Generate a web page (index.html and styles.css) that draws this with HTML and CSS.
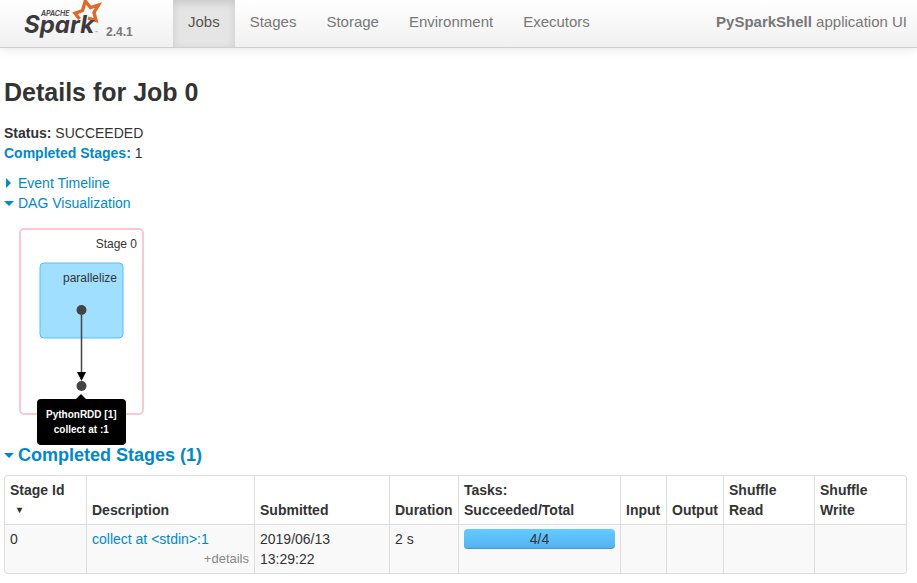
FILE: index.html
```html
<!DOCTYPE html>
<html lang="en">
<head>
<meta charset="utf-8">
<title>PySparkShell - Details for Job 0</title>
<link rel="stylesheet" href="styles.css">
</head>
<body>
<header class="navbar">
  <a class="brand" href="#" aria-label="Apache Spark">
    <svg class="logo" width="80" height="40" viewBox="22 0 80 40">
      <text class="logo-small" x="41" y="16">APACHE</text>
      <path class="star" d="M79.500 19L75 13.300L82.500 10.500L85.300 1.200L90.500 7.500L98.500 5L94 12.500L96 20.500L88 18"/>
      <text class="logo-name" x="24" y="33">Spark</text>
      <text class="logo-tm" x="95" y="34">™</text>
    </svg>
    <span class="version">2.4.1</span>
  </a>
  <nav class="nav">
    <a class="tab active" href="#">Jobs</a>
    <a class="tab" href="#">Stages</a>
    <a class="tab" href="#">Storage</a>
    <a class="tab" href="#">Environment</a>
    <a class="tab" href="#">Executors</a>
  </nav>
  <p class="app-name"><strong>PySparkShell</strong> application UI</p>
</header>
<main class="page">
  <h1 class="title">Details for Job 0</h1>
  <ul class="summary">
    <li><strong>Status:</strong> SUCCEEDED</li>
    <li><a href="#completed"><strong>Completed Stages:</strong></a> 1</li>
  </ul>
  <div class="toggles">
    <a class="toggle" href="#"><span class="arrow right"></span>Event Timeline</a>
    <a class="toggle" href="#"><span class="arrow down"></span>DAG Visualization</a>
  </div>
  <div class="dag">
    <svg class="graph" width="130" height="192" viewBox="0 0 130 192">
      <rect class="stage" x="4" y="4" width="123" height="185" rx="4"/>
      <text class="label" x="121" y="23">Stage 0</text>
      <rect class="cluster" x="24" y="38" width="83" height="75" rx="4"/>
      <text class="label" x="101" y="57">parallelize</text>
      <path class="edge" d="M65.500 85V152"/>
      <path class="head" d="M61 147H70L65.500 156Z"/>
      <circle class="node" cx="65.500" cy="85" r="5"/>
      <circle class="node" cx="65.500" cy="161" r="5"/>
    </svg>
    <div class="tooltip" role="tooltip">PythonRDD [1]<br>collect at :1</div>
  </div>
  <h2 class="section" id="completed"><a class="toggle" href="#completed"><span class="arrow down"></span>Completed Stages (1)</a></h2>
  <table class="stages">
    <colgroup>
      <col class="c-id"><col><col class="c-submitted"><col class="c-duration"><col class="c-tasks"><col class="c-input"><col class="c-output"><col class="c-read"><col class="c-write">
    </colgroup>
    <thead>
      <tr><th>Stage Id <span class="sort">▾</span></th><th>Description</th><th>Submitted</th><th>Duration</th><th>Tasks: Succeeded/Total</th><th>Input</th><th>Output</th><th>Shuffle Read</th><th>Shuffle Write</th></tr>
    </thead>
    <tbody>
      <tr>
        <td>0</td>
        <td><a href="#">collect at &lt;stdin&gt;:1</a><span class="details">+details</span></td>
        <td>2019/06/13 13:29:22</td>
        <td>2 s</td>
        <td><div class="progress">4/4</div></td>
        <td></td><td></td><td></td><td></td>
      </tr>
    </tbody>
  </table>
</main>
</body>
</html>
```
FILE: styles.css
```css
* { box-sizing: border-box; }

body {
  margin: 0;
  background: #fff;
  color: #333;
  font: 14px/20px "Liberation Sans", Arial, sans-serif;
}

a { color: #08c; text-decoration: none; }

.navbar {
  display: flex;
  height: 48px;
  padding: 0 10px 0 22px;
  background: linear-gradient(#fff, #f0f0f0);
  border-bottom: 1px solid #d0d0d0;
  box-shadow: 0 1px 10px rgba(0, 0, 0, 0.1);
  color: #777;
  font-size: 15px;
}

.brand { display: flex; flex: 0 0 151px; gap: 4px; }
.logo { flex: none; }
.logo-name { font: italic 700 24px Inter, sans-serif; fill: #3c3a3e; }
.logo-small { font: italic 600 7px Inter, sans-serif; fill: #3c3a3e; }
.logo-tm { font: 4px Lato, sans-serif; fill: #777; }
.star { fill: none; stroke: #e0692a; stroke-width: 3.4; }
.version { padding-top: 22px; color: #777; font-size: 12px; font-weight: bold; }

.nav { display: flex; }
.tab { padding: 12px 15px 0; color: #777; }
.active { background: #e5e5e5; box-shadow: inset 0 3px 8px rgba(0, 0, 0, 0.13); color: #555; }
.app-name { margin: 12px 0 0 auto; white-space: nowrap; }

.page { padding: 24px 10px 8px 4px; }
.title { margin: 0 0 11px; font-size: 25px; line-height: 40px; }
.summary { margin: 0 0 10px; padding: 0; list-style: none; }

.toggles { display: flex; flex-direction: column; align-items: flex-start; }
.toggle { display: flex; align-items: center; }
.arrow { flex: none; width: 14px; height: 10px; background: #08c; }
.right { clip-path: polygon(2px 0, 7px 5px, 2px 10px); }
.down { clip-path: polygon(0 3px, 10px 3px, 5px 8px); }

.dag { position: relative; padding: 12px 0 0 12px; height: 232px; }
.graph { display: block; }
.stage { fill: #fff; stroke: #ffc6d0; stroke-width: 2; }
.cluster { fill: #a0dfff; stroke: #52c0ff; stroke-width: 1; }
.label { fill: #333; font-size: 12px; text-anchor: end; }
.edge { stroke: #444; stroke-width: 1.5; }
.head { fill: #000; }
.node { fill: #444; }

.tooltip {
  position: absolute;
  top: 186px;
  left: 33px;
  padding: 8px 9px;
  border-radius: 4px;
  background: #000;
  color: #fff;
  font-size: 10px;
  font-weight: bold;
  line-height: 15px;
  text-align: center;
  white-space: nowrap;
}
.tooltip::before {
  content: "";
  position: absolute;
  top: -5px;
  left: 50%;
  margin-left: -5px;
  border: 5px solid transparent;
  border-top: 0;
  border-bottom-color: #000;
}

.section { margin: 0 0 10px; font-size: 18px; line-height: 20px; }

.stages {
  width: 100%;
  table-layout: fixed;
  border: 1px solid #ddd;
  border-left: 0;
  border-radius: 4px;
  border-spacing: 0;
}
.stages th, .stages td { padding: 4px 5px; border-left: 1px solid #ddd; text-align: left; }
.stages th { vertical-align: bottom; }
.stages td { height: 49px; border-top: 1px solid #ddd; background: #f9f9f9; vertical-align: top; }
.stages th:first-child { border-top-left-radius: 4px; }
.stages td:first-child { border-bottom-left-radius: 4px; }
.stages td:last-child { border-bottom-right-radius: 4px; }
.c-id { width: 82px; }
.c-submitted { width: 135px; }
.c-duration { width: 69px; }
.c-tasks { width: 162px; }
.c-input { width: 46px; }
.c-output { width: 57px; }
.c-read { width: 91px; }
.c-write { width: 92px; }
.sort { display: block; padding-left: 7px; font-size: 10px; }
.details { display: block; color: #888; font-size: 13px; text-align: right; }

.progress {
  height: 20px;
  border-radius: 4px;
  background: linear-gradient(#64cbff, #54b0f0);
  box-shadow: inset 0 -1px 0 rgba(0, 0, 0, 0.15);
  text-align: center;
}
```
